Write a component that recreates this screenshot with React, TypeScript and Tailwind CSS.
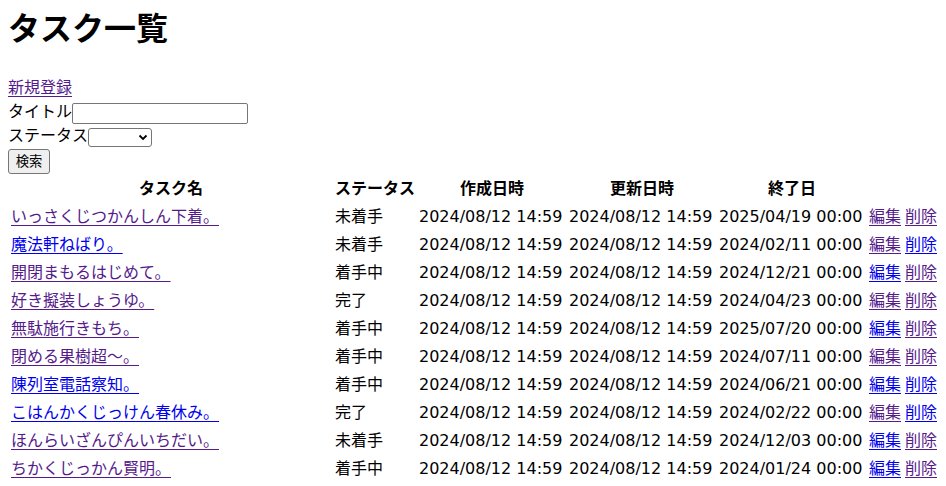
const BLUE = "text-[#0000ee]";
const PURPLE = "text-[#551a8b]";

type Task = {
  title: string;
  status: string;
  end: string;
  titleVisited: boolean;
  editVisited: boolean;
  deleteVisited: boolean;
};

const tasks: Task[] = [
  { title: "いっさくじつかんしん下着。", status: "未着手", end: "2025/04/19 00:00", titleVisited: true, editVisited: true, deleteVisited: true },
  { title: "魔法軒ねばり。", status: "未着手", end: "2024/02/11 00:00", titleVisited: false, editVisited: true, deleteVisited: false },
  { title: "開閉まもるはじめて。", status: "着手中", end: "2024/12/21 00:00", titleVisited: true, editVisited: false, deleteVisited: true },
  { title: "好き擬装しょうゆ。", status: "完了", end: "2024/04/23 00:00", titleVisited: true, editVisited: true, deleteVisited: true },
  { title: "無駄施行きもち。", status: "着手中", end: "2025/07/20 00:00", titleVisited: true, editVisited: false, deleteVisited: true },
  { title: "閉める果樹超〜。", status: "着手中", end: "2024/07/11 00:00", titleVisited: true, editVisited: true, deleteVisited: true },
  { title: "陳列室電話察知。", status: "着手中", end: "2024/06/21 00:00", titleVisited: false, editVisited: false, deleteVisited: false },
  { title: "こはんかくじっけん春休み。", status: "完了", end: "2024/02/22 00:00", titleVisited: false, editVisited: true, deleteVisited: false },
  { title: "ほんらいざんぴんいちだい。", status: "未着手", end: "2024/12/03 00:00", titleVisited: true, editVisited: false, deleteVisited: true },
  { title: "ちかくじっかん賢明。", status: "着手中", end: "2024/01/24 00:00", titleVisited: true, editVisited: false, deleteVisited: true },
];

const CREATED = "2024/08/12 14:59";

function Link({ visited, children }: { visited: boolean; children: React.ReactNode }) {
  return (
    <a href="#" className={`underline underline-offset-[3px] ${visited ? PURPLE : BLUE}`}>
      {children}
    </a>
  );
}

export default function App() {
  return (
    <div
      className="min-h-screen bg-white px-2 pt-[5px] text-[16px] text-black"
      style={{ fontFamily: '"DejaVu Sans", "Noto Sans CJK JP", sans-serif' }}
    >
      <h1 className="mb-[23px] text-[32px] font-bold leading-[48px]">タスク一覧</h1>

      <div className="leading-[24px]">
        <Link visited>新規登録</Link>
      </div>

      <div className="flex h-6 items-center leading-[24px]">
        <span>タイトル</span>
        <input
          type="text"
          className="mt-[2px] h-[21px] w-[176px] rounded-[2px] border border-[#767676] bg-white"
        />
      </div>

      <div className="flex h-6 items-center leading-[24px]">
        <span>ステータス</span>
        <div className="relative mt-[2px]">
          <select className="block h-[19px] w-[64px] appearance-none rounded-[3px] border border-[#767676] bg-white">
            <option></option>
          </select>
          <svg
            className="pointer-events-none absolute right-[4px] top-[6px]"
            width="10"
            height="7"
            viewBox="0 0 10 7"
          >
            <path d="M1.5 1.5 L5 5 L8.5 1.5" fill="none" stroke="#000" strokeWidth="1.8" />
          </svg>
        </div>
      </div>

      <button
        type="button"
        className="mt-px h-[25px] w-[42px] rounded-[3px] border border-[#767676] bg-[#efefef] text-[13.33px] leading-[21px]"
      >
        検索
      </button>

      <table className="w-[930px] table-fixed border-separate border-spacing-[2px] leading-[24px]">
        <colgroup>
          <col className="w-[322px]" />
          <col className="w-[82px]" />
          <col className="w-[148px]" />
          <col className="w-[148px]" />
          <col className="w-[148px]" />
          <col className="w-[34px]" />
          <col className="w-[32px]" />
        </colgroup>
        <thead>
          <tr>
            <th className="p-px text-center font-bold">タスク名</th>
            <th className="p-px text-center font-bold whitespace-nowrap">ステータス</th>
            <th className="p-px text-center font-bold">作成日時</th>
            <th className="p-px text-center font-bold">更新日時</th>
            <th className="p-px text-center font-bold">終了日</th>
            <th className="p-px"></th>
            <th className="p-px"></th>
          </tr>
        </thead>
        <tbody>
          {tasks.map((t) => (
            <tr key={t.title}>
              <td className="p-px whitespace-nowrap">
                <Link visited={t.titleVisited}>{t.title}</Link>
              </td>
              <td className="p-px whitespace-nowrap">{t.status}</td>
              <td className="p-px whitespace-nowrap">{CREATED}</td>
              <td className="p-px whitespace-nowrap">{CREATED}</td>
              <td className="p-px whitespace-nowrap">{t.end}</td>
              <td className="p-px whitespace-nowrap">
                <Link visited={t.editVisited}>編集</Link>
              </td>
              <td className="p-px whitespace-nowrap">
                <Link visited={t.deleteVisited}>削除</Link>
              </td>
            </tr>
          ))}
        </tbody>
      </table>
    </div>
  );
}
